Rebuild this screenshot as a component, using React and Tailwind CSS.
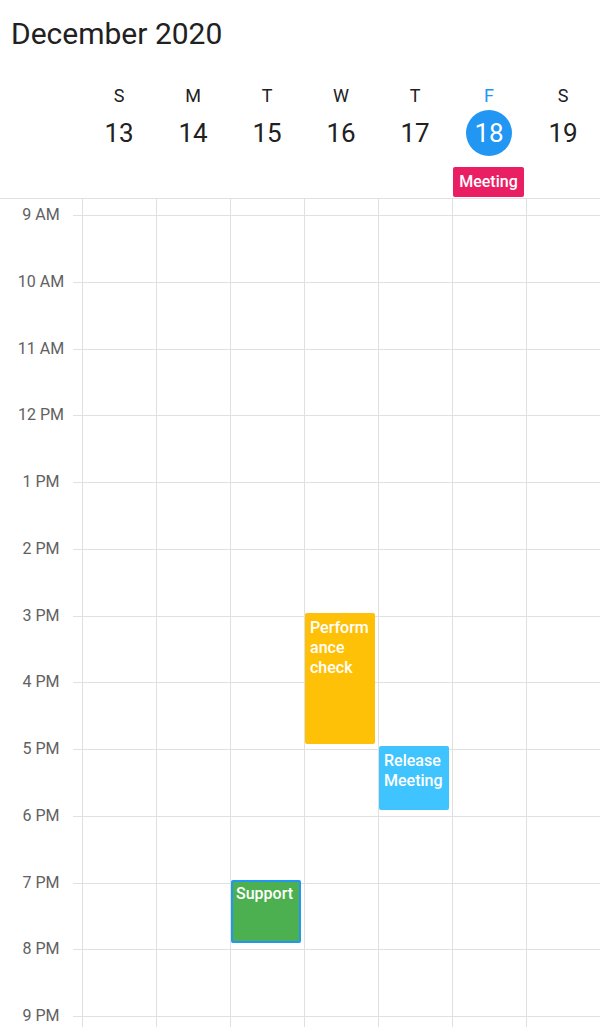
import React from "react";

const days = [
  { letter: "S", date: 13 },
  { letter: "M", date: 14 },
  { letter: "T", date: 15 },
  { letter: "W", date: 16 },
  { letter: "T", date: 17 },
  { letter: "F", date: 18, today: true },
  { letter: "S", date: 19 },
];

const hours = ["9 AM", "10 AM", "11 AM", "12 PM", "1 PM", "2 PM", "3 PM", "4 PM", "5 PM", "6 PM", "7 PM", "8 PM", "9 PM"];

// posições em px a partir do topo da grade
const events = [
  { day: 3, title: "Performance check", top: 414, height: 131, color: "bg-[#ffc107]" },
  { day: 4, title: "Release Meeting", top: 547, height: 64, color: "bg-[#40c4ff]" },
  { day: 2, title: "Support", top: 681, height: 63, color: "bg-[#4caf50] border-2 border-[#2196f3]", bordered: true },
];

export default function App() {
  return (
    <div className="w-[600px] h-[1027px] overflow-hidden bg-white font-['Roboto','Liberation_Sans',sans-serif] text-[#212121]">
      {/* cabeçalho */}
      <div className="h-[199px] border-b border-[#e0e0e0]">
        <div className="pt-[16px] pl-[11px] text-[30px] leading-[36px]">December 2020</div>
        <div className="flex pl-[82px] mt-[32px]">
          {days.map((d, i) => (
            <div key={i} className="w-[74px] flex flex-col items-center">
              <div className={`text-[18px] leading-[24px] ${d.today ? "text-[#2196f3]" : ""}`}>{d.letter}</div>
              <div
                className={`mt-[2px] w-[46px] h-[46px] rounded-full flex items-center justify-center text-[26px] leading-[46px] ${
                  d.today ? "bg-[#2196f3] text-white" : ""
                }`}
              >
                {d.date}
              </div>
            </div>
          ))}
        </div>
        <div className="flex pl-[82px] mt-[11px] h-[30px]">
          {days.map((d, i) => (
            <div key={i} className="w-[74px] pl-[1px]">
              {d.today && (
                <div className="w-[71px] h-[30px] rounded-[2px] bg-[#e91e63] text-white text-[16px] font-medium leading-[30px] text-center">
                  Meeting
                </div>
              )}
            </div>
          ))}
        </div>
      </div>

      {/* grade de horas */}
      <div className="flex h-[828px] overflow-hidden">
        <div className="w-[82px] pt-[16px] shrink-0">
          {hours.map((h) => (
            <div key={h} className="h-[66.75px]">
              <div className="ml-[73px] border-t border-[#e0e0e0]" />
              <div className="-mt-[11px] text-center text-[16px] leading-[20px] text-[#616161]">{h}</div>
            </div>
          ))}
        </div>
        {days.map((d, i) => (
          <div key={i} className="relative w-[74px] shrink-0 border-l border-[#e0e0e0] pt-[16px]">
            {hours.map((h) => (
              <div key={h} className="h-[66.75px] border-t border-[#e0e0e0]" />
            ))}
            {events
              .filter((e) => e.day === i)
              .map((e) => (
                <div
                  key={e.title}
                  className={`absolute left-0 w-[70px] rounded-[2px] text-white text-[16px] font-medium leading-[20px] [overflow-wrap:anywhere] ${e.color} ${
                    e.bordered ? "pt-[2px] pl-[3px] pr-[3px]" : "pt-[5px] pl-[5px] pr-[5px]"
                  }`}
                  style={{ top: e.top, height: e.height }}
                >
                  {e.title}
                </div>
              ))}
          </div>
        ))}
      </div>
    </div>
  );
}
